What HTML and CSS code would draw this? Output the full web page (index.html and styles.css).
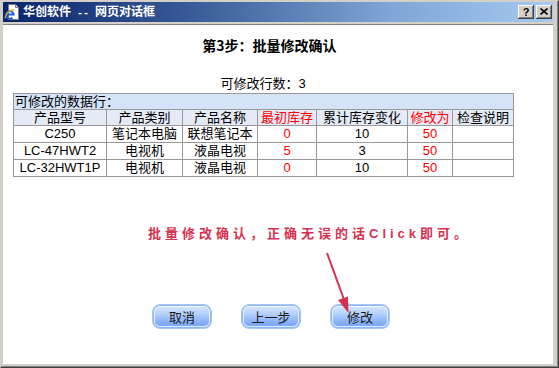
FILE: index.html
```html
<!DOCTYPE html>
<html lang="zh-CN">
<head>
<meta charset="utf-8">
<title>华创软件 -- 网页对话框</title>
<link rel="stylesheet" href="styles.css">
</head>
<body>
<div class="window">
  <div class="titlebar">
    <svg class="ie-icon" width="16" height="16" viewBox="0 0 16 16">
      <path d="M4.5 0.5h7l3 3v12h-10z" fill="#ffffff" stroke="#7a7a7a"/>
      <path d="M11.5 0.5v3h3" fill="#dcdcdc" stroke="#7a7a7a"/>
      <path d="M2.5 10.5h7.2a3.8 3.8 0 1 0 -1.2 3.3" fill="none" stroke="#1d5fd6" stroke-width="2"/>
      <path d="M0.8 14.5C1.5 9 7 5 10.5 6.2" fill="none" stroke="#e8a81c" stroke-width="1.2"/>
    </svg>
    <span class="title">华创软件<span class="sep"> -- </span>网页对话框</span>
    <div class="caption-btns">
      <span class="cbtn help">?</span>
      <span class="cbtn close">
        <svg width="8" height="7" viewBox="0 0 8 7"><path d="M0.5 0.5l7 6M7.5 0.5l-7 6" stroke="#000" stroke-width="1.6"/></svg>
      </span>
    </div>
  </div>
  <div class="content">
    <h1 class="step">第3步：批量修改确认</h1>
    <p class="count">可修改行数：3</p>
    <table class="grid">
      <colgroup>
        <col class="c1"><col class="c2"><col class="c3"><col class="c4"><col class="c5"><col class="c6"><col class="c7">
      </colgroup>
      <tr class="cap"><td colspan="7">可修改的数据行：</td></tr>
      <tr class="head">
        <td>产品型号</td><td>产品类别</td><td>产品名称</td><td class="red">最初库存</td><td>累计库存变化</td><td class="red">修改为</td><td>检查说明</td>
      </tr>
      <tr class="row">
        <td>C250</td><td>笔记本电脑</td><td>联想笔记本</td><td class="red">0</td><td>10</td><td class="red">50</td><td></td>
      </tr>
      <tr class="row">
        <td>LC-47HWT2</td><td>电视机</td><td>液晶电视</td><td class="red">5</td><td>3</td><td class="red">50</td><td></td>
      </tr>
      <tr class="row">
        <td>LC-32HWT1P</td><td>电视机</td><td>液晶电视</td><td class="red">0</td><td>10</td><td class="red">50</td><td></td>
      </tr>
    </table>
    <p class="note">批量修改确认，正确无误的话Click即可。</p>
    <svg class="arrow" width="40" height="66" viewBox="0 0 40 66">
      <path d="M9 2L25.8 48" stroke="#d8304f" stroke-width="2" fill="none"/>
      <path d="M30.5 62L30 45.5L20 49z" fill="#d8304f"/>
    </svg>
    <div class="actions">
      <button class="btn">取消</button>
      <button class="btn">上一步</button>
      <button class="btn">修改</button>
    </div>
  </div>
</div>
</body>
</html>
```

FILE: styles.css
```css
html, body {
  margin: 0;
  padding: 0;
}

body {
  width: 559px;
  height: 368px;
  overflow: hidden;
  font-family: "Liberation Sans", "Noto Sans CJK SC", sans-serif;
  font-size: 13px;
  color: #000;
}

.window {
  box-sizing: border-box;
  width: 559px;
  height: 368px;
  display: flex;
  flex-direction: column;
  background: #d4d0c8;
  border: 1px solid;
  border-color: #d4d0c8 #404040 #404040 #d4d0c8;
  box-shadow: inset -1px -1px #808080;
  padding: 1px 5px 3px 2px;
}

.titlebar {
  height: 20px;
  flex: none;
  display: flex;
  align-items: center;
  background: linear-gradient(90deg, #0a246a 0%, #3a5c98 35%, #7fa4d6 70%, #a6caf0 100%);
  padding-left: 1px;
  padding-right: 1px;
}

.ie-icon {
  flex: none;
  display: block;
}

.title {
  margin-left: 3px;
  color: #fff;
  font-weight: bold;
  font-size: 12px;
  white-space: pre;
  font-family: "Noto Sans CJK SC", "Liberation Sans", sans-serif;
  line-height: 20px;
}

.title .sep {
  font-family: "Liberation Mono", monospace;
  font-size: 10px;
  font-weight: bold;
}

.caption-btns {
  margin-left: auto;
  display: flex;
  gap: 2px;
}

.cbtn {
  box-sizing: border-box;
  width: 16px;
  height: 14px;
  display: flex;
  align-items: center;
  justify-content: center;
  background: #d4d0c8;
  box-shadow: inset -1px -1px #404040, inset 1px 1px #ffffff, inset -2px -2px #808080;
  font: bold 11px "Liberation Sans", sans-serif;
  color: #000;
  line-height: 14px;
  padding-bottom: 1px;
}

.cbtn svg {
  display: block;
}

.content {
  flex: 1;
  position: relative;
  margin-top: 2px;
  background: #fff;
  border-top: 1px solid #808080;
  display: flex;
  flex-direction: column;
}

.step {
  margin: 10px 0 0 0;
  padding-right: 17px;
  font-size: 14px;
  line-height: 20px;
  font-weight: bold;
  text-align: center;
  font-family: "Noto Sans CJK SC", sans-serif;
}

.count {
  margin: 21px 0 0 10px;
  width: 500px;
  line-height: 16px;
  text-align: center;
}

.grid {
  margin: 1px 0 0 10px;
  width: 500px;
  table-layout: fixed;
  border-collapse: collapse;
  border: 1px solid #999;
}

.c1 { width: 93px; }
.c2 { width: 76px; }
.c3 { width: 75px; }
.c4 { width: 59px; }
.c5 { width: 91px; }
.c6 { width: 45px; }
.c7 { width: 61px; }

.grid td {
  border: 1px solid #999;
  padding: 0;
  text-align: center;
  white-space: nowrap;
  overflow: hidden;
}

.grid .cap td {
  background: #d4e3f7;
  text-align: left;
  padding-left: 1px;
  height: 15px;
  line-height: 15px;
}

.grid .head td {
  background: #e4ebf7;
  height: 15px;
  line-height: 15px;
}

.grid .row td {
  height: 16px;
  line-height: 16px;
}

.grid td.red {
  color: #ff0000;
}

.note {
  margin: 49px 0 0 0;
  padding-left: 145px;
  line-height: 16px;
  font-size: 13px;
  font-weight: bold;
  letter-spacing: 4px;
  color: #d8304f;
  font-family: "Liberation Sans", "Noto Sans CJK SC", sans-serif;
}

.arrow {
  position: absolute;
  left: 315px;
  top: 226px;
}

.actions {
  margin-top: 62px;
  padding-left: 149px;
  display: flex;
  gap: 29px;
}

.btn {
  box-sizing: border-box;
  width: 60px;
  height: 25px;
  padding: 0;
  border: 1px solid #a6c6f8;
  border-radius: 8px;
  background: linear-gradient(180deg, #dbe8ff 0%, #b9d3fd 35%, #86b0f7 75%, #74a3f3 100%);
  box-shadow: inset 0 0 0 1px #8fb6f4, inset 0 0 0 2px rgba(255, 255, 255, 0.75);
  font-family: "Noto Sans CJK SC", sans-serif;
  font-size: 13px;
  color: #1a1a1a;
  line-height: 22px;
}
```
